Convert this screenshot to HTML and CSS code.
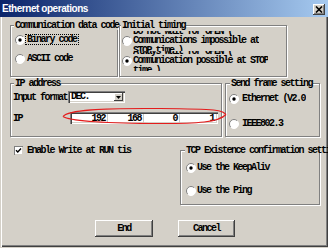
FILE: index.html
```html
<!DOCTYPE html>
<html>
<head>
<meta charset="utf-8">
<link rel="stylesheet" href="styles.css">
</head>
<body>
<svg class="defs" aria-hidden="true">
  <symbol id="rb" viewBox="0 0 10 10">
    <circle cx="5" cy="5" r="4.5" fill="#fff"/>
    <path d="M1.8 8.2A4.5 4.5 0 0 1 8.2 1.8" fill="none" stroke="#808080"/>
    <path d="M8.2 1.8A4.5 4.5 0 0 1 1.8 8.2" fill="none" stroke="#fff"/>
  </symbol>
</svg>
<div class="window">
  <div class="titlebar">
    <span class="title">Ethernet operations</span>
    <span class="close"><svg width="8" height="7" viewBox="0 0 8 7"><path d="M1 0.5L7 6.5M7 0.5L1 6.5" stroke="#000" stroke-width="1.6"/></svg></span>
  </div>
  <div class="content">
    <div class="row row1">
      <fieldset class="group g-code">
        <legend>Communication data code</legend>
        <div class="gbody">
          <div class="opt"><svg class="radio" viewBox="0 0 10 10"><use href="#rb"/><circle cx="5" cy="5" r="1.7"/></svg><span class="focus">Binary code</span></div>
          <div class="opt opt2"><svg class="radio" viewBox="0 0 10 10"><use href="#rb"/></svg><span class="txt">ASCII code</span></div>
        </div>
      </fieldset>
      <fieldset class="group g-timing">
        <legend>Initial timing</legend>
        <div class="gbody">
          <div class="multi"><svg class="radio" viewBox="0 0 10 10"><use href="#rb"/></svg><span class="clip"><span class="lines">Do not wait for OPEN (<br>Communications impossible at<br>STOP time.)</span></span></div>
          <div class="multi"><svg class="radio" viewBox="0 0 10 10"><use href="#rb"/><circle cx="5" cy="5" r="1.7"/></svg><span class="clip"><span class="lines">Always wait for OPEN (<br>Communication possible at STOP<br>time.)</span></span></div>
        </div>
      </fieldset>
    </div>
    <div class="row row2">
      <fieldset class="group g-ip">
        <legend>IP address</legend>
        <div class="gbody">
          <div class="field">
            <span class="flabel">Input format</span>
            <span class="combo"><span class="cval">DEC.</span><span class="cbtn"><svg width="5" height="3" viewBox="0 0 5 3"><path d="M0 0H5L2.5 3Z"/></svg></span></span>
          </div>
          <div class="field field-ip">
            <span class="flabel iplabel">IP</span>
            <span class="ipedit"><span class="seg">192</span><span class="seg">168</span><span class="seg">0</span><span class="seg last">1</span></span>
          </div>
        </div>
      </fieldset>
      <fieldset class="group g-frame">
        <legend>Send frame setting</legend>
        <div class="gbody">
          <div class="opt"><svg class="radio" viewBox="0 0 10 10"><use href="#rb"/><circle cx="5" cy="5" r="1.7"/></svg><span class="txt cut">Ethernet (V2.0)</span></div>
          <div class="opt opt-ieee"><svg class="radio" viewBox="0 0 10 10"><use href="#rb"/></svg><span class="txt">IEEE802.3</span></div>
        </div>
      </fieldset>
    </div>
    <div class="row row3">
      <div class="checkrow">
        <span class="check"><svg width="9" height="9" viewBox="0 0 9 9"><path d="M2 4.2L3.8 6L7 2.6" fill="none" stroke="#000" stroke-width="1.4"/></svg></span>
        <span class="txt">Enable Write at RUN tis</span>
      </div>
      <fieldset class="group g-tcp">
        <legend>TCP Existence confirmation setting</legend>
        <div class="gbody">
          <div class="opt"><svg class="radio" viewBox="0 0 10 10"><use href="#rb"/><circle cx="5" cy="5" r="1.7"/></svg><span class="txt">Use the KeepAliv</span></div>
          <div class="opt opt-ping"><svg class="radio" viewBox="0 0 10 10"><use href="#rb"/></svg><span class="txt">Use the Ping</span></div>
        </div>
      </fieldset>
    </div>
    <div class="row row4">
      <span class="btn btn-end">End</span>
      <span class="btn btn-cancel">Cancel</span>
    </div>
  </div>
  <svg class="mark" viewBox="0 0 328 248" width="328" height="248">
    <path d="M63 116.5C68 110 100 108 160 108.5S221 110 226 114.5" fill="none" stroke="#e41c1c" stroke-width="1.1"/>
    <path d="M63 116.5C70 121 100 123 150 123.5S219 122 226 114.5" fill="none" stroke="#e41c1c" stroke-width="1.1"/>
  </svg>
</div>
</body>
</html>
```
FILE: styles.css
```css
* { box-sizing: border-box; }
html, body { margin: 0; padding: 0; }
body {
  width: 328px;
  height: 248px;
  overflow: hidden;
  background: #d4d0c8;
  font-family: "Liberation Mono", "Courier New", monospace;
  font-size: 10px;
  font-weight: bold;
  letter-spacing: -1.5px;
  color: #000;
}
.defs { position: absolute; width: 0; height: 0; }
.window {
  position: relative;
  width: 328px;
  height: 247px;
  background: #d4d0c8;
  overflow: hidden;
  box-shadow: inset 1px 0 0 #d4d0c8, inset 2px 0 0 #fff, inset -1px -1px 0 #404040, inset -2px -2px 0 #808080;
}
.titlebar {
  height: 17px;
  background: linear-gradient(to right, #0a246a, #a6caf0);
  display: flex;
  align-items: center;
  justify-content: space-between;
  padding: 0 3px 0 2px;
}
.title {
  font-family: "Liberation Sans", Arial, sans-serif;
  font-weight: bold;
  font-size: 10px;
  letter-spacing: -0.45px;
  color: #fff;
}
.close {
  width: 12px;
  height: 11px;
  margin-top: 1px;
  background: #d4d0c8;
  box-shadow: inset -1px -1px 0 #404040, inset 1px 1px 0 #fff, inset -2px -2px 0 #808080;
  display: flex;
  align-items: center;
  justify-content: center;
}
.content { width: 328px; padding: 4px 8px 0 10px; }
.row { display: flex; align-items: flex-start; }
.row1 { gap: 1px; }
.row2 { gap: 3px; margin-top: 2px; }
.row3 { margin-top: 9px; justify-content: space-between; }
.row4 { margin-top: 15px; justify-content: center; gap: 25px; }

fieldset.group {
  flex: none;
  margin: 0;
  padding: 0;
  min-width: 0;
  border: 1px solid #808080;
  box-shadow: inset 1px 1px 0 #fff, 1px 1px 0 #fff;
}
legend {
  padding: 0 1px;
  margin-left: 3px;
  height: 9px;
  line-height: 9px;
  white-space: nowrap;
  overflow: visible;
  background: #d4d0c8;
}
.g-code { width: 108px; height: 56px; }
.g-code legend { width: 104px; }
.g-timing { width: 168px; height: 56px; }
.g-timing legend { margin-left: 1px; }
.g-ip { width: 212px; height: 58px; }
.g-frame { width: 95px; height: 58px; }
.g-frame legend { margin-left: 4px; }
.g-tcp { width: 140px; height: 59px; }
.g-tcp legend { margin-left: 4px; width: 134px; }

.radio { width: 10px; height: 10px; flex: none; display: block; }
.opt { display: flex; align-items: center; height: 11px; line-height: 11px; white-space: nowrap; }
.txt { margin-left: 2px; }

.g-code .gbody { padding: 4px 0 0 4px; }
.g-code .opt2 { margin-top: 8px; }
.focus {
  margin-left: 0;
  padding: 0 1px;
  height: 11px;
  line-height: 9px;
  border: 1px dotted #000;
}

.g-timing .gbody { padding: 1px 0 0 2px; }
.multi { display: flex; align-items: center; height: 20px; }
.clip { margin-left: 1px; height: 20px; overflow: hidden; display: flex; align-items: center; white-space: nowrap; }
.lines { line-height: 9.5px; }

.g-ip .gbody { padding: 3px 0 0 2px; }
.field { display: flex; align-items: center; height: 12px; }
.field-ip { margin-top: 9px; }
.flabel { white-space: nowrap; }
.iplabel { width: 57px; }
.combo {
  margin-left: 1px;
  width: 57px;
  height: 12px;
  background: #fff;
  display: flex;
  align-items: center;
  justify-content: space-between;
  padding: 2px;
  box-shadow: inset 1px 1px 0 #808080, inset 2px 2px 0 #404040, inset -1px -1px 0 #fff, inset -2px -2px 0 #d4d0c8;
}
.cval { padding-left: 1px; line-height: 8px; }
.cbtn {
  width: 9px;
  height: 8px;
  background: #d4d0c8;
  box-shadow: inset -1px -1px 0 #404040, inset 1px 1px 0 #fff;
  display: flex;
  align-items: center;
  justify-content: center;
}
.cbtn svg { display: block; }
.ipedit {
  width: 148px;
  height: 12px;
  background: #fff;
  display: flex;
  padding: 2px 2px 1px 2px;
  box-shadow: inset 1px 1px 0 #808080, inset 2px 2px 0 #404040, inset -1px -1px 0 #fff, inset -2px -2px 0 #d4d0c8;
}
.seg {
  width: 36px;
  text-align: right;
  padding-right: 2px;
  line-height: 9px;
  border-right: 1px solid #c8c8c8;
}
.seg.last { border-right: 0; }

.g-frame .gbody { padding: 5px 0 0 3px; }
.g-frame .txt { margin-left: 3px; }
.cut { width: 64px; overflow: hidden; }
.opt-ieee { margin-top: 14px; }

.checkrow { display: flex; align-items: center; height: 9px; padding-left: 4px; white-space: nowrap; }
.check {
  width: 9px;
  height: 9px;
  background: #fff;
  box-shadow: inset 1px 1px 0 #808080, inset -1px -1px 0 #d4d0c8;
}
.check svg { display: block; }
.checkrow .txt { margin-left: 4px; }

.g-tcp .gbody { padding: 7px 0 0 5px; }
.g-tcp .txt { margin-left: 1px; }
.opt-ping { margin-top: 12px; }

.btn {
  height: 17px;
  line-height: 17px;
  text-align: center;
  background: #d4d0c8;
  box-shadow: inset -1px -1px 0 #404040, inset 1px 1px 0 #fff, inset -2px -2px 0 #808080;
}
.btn-end { width: 58px; }
.btn-cancel { width: 57px; }

.mark { position: absolute; left: 0; top: 0; pointer-events: none; }
```
